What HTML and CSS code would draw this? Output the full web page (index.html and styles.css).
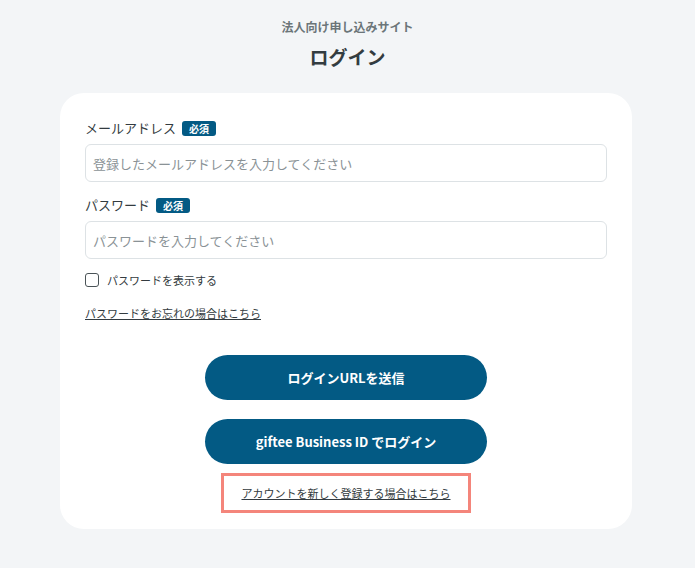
FILE: index.html
```html
<!DOCTYPE html>
<html lang="ja">
<head>
    <meta charset="UTF-8">
    <meta name="viewport" content="width=device-width, initial-scale=1.0">
    <title>ログイン</title>
    <link rel="stylesheet" href="styles.css">
</head>
<body>
    <div class="header">
        <p class="site-name">法人向け申し込みサイト</p>
        <h1>ログイン</h1>
    </div>

    <div class="card">
        <div class="field">
            <label class="label" for="email">メールアドレス <span class="required">必須</span></label>
            <input type="email" id="email" class="input" placeholder="登録したメールアドレスを入力してください">
        </div>

        <div class="field">
            <label class="label" for="password">パスワード <span class="required">必須</span></label>
            <input type="password" id="password" class="input" placeholder="パスワードを入力してください">
        </div>

        <label class="check">
            <input type="checkbox" id="showPassword">
            <span class="box"></span>
            <span>パスワードを表示する</span>
        </label>

        <a href="#" class="link forgot">パスワードをお忘れの場合はこちら</a>

        <div class="actions">
            <button type="button">ログインURLを送信</button>
            <button type="button" class="second">giftee Business ID でログイン</button>
            <div class="signup">
                <a href="#" class="link">アカウントを新しく登録する場合はこちら</a>
            </div>
        </div>
    </div>
</body>
</html>
```

FILE: styles.css
```css
body {
    margin: 0;
    background: #f3f5f7;
    font-family: "Noto Sans CJK JP", "Noto Sans", sans-serif;
    color: #333b40;
}
.header {
    text-align: center;
    padding-top: 17px;
}
.site-name {
    margin: 0;
    font-size: 12px;
    font-weight: bold;
    color: #6b7579;
    line-height: 20px;
}
h1 {
    margin: 6px 0 0;
    font-size: 19px;
    line-height: 28px;
    color: #333c40;
}
.card {
    width: 522px;
    margin: 22px 0 0 60px;
    padding: 25px 25px 16px;
    background: #fff;
    border-radius: 24px;
}
.field {
    margin-bottom: 13px;
}
.label {
    display: flex;
    align-items: center;
    gap: 6px;
    font-size: 13px;
    line-height: 20px;
    margin-bottom: 6px;
}
.required {
    display: inline-block;
    background: #035a84;
    color: #fff;
    font-size: 10px;
    font-weight: bold;
    line-height: 15px;
    padding: 0 7px;
    border-radius: 3px;
}
.input {
    display: block;
    box-sizing: border-box;
    width: 100%;
    height: 38px;
    padding: 0 7px;
    border: 1px solid #dde2e5;
    border-radius: 6px;
    font-family: inherit;
    font-size: 13px;
    color: #333b40;
}
.input::placeholder {
    color: #8a9296;
}
.check {
    display: flex;
    align-items: center;
    gap: 8px;
    font-size: 11px;
    line-height: 16px;
    margin-top: 1px;
}
.check input {
    display: none;
}
.box {
    width: 12px;
    height: 12px;
    border: 1px solid #4a5357;
    border-radius: 3px;
}
.link {
    color: #333b40;
    font-size: 11px;
    line-height: 16px;
    text-decoration: underline;
}
.forgot {
    display: inline-block;
    margin-top: 17px;
}
.actions {
    display: flex;
    flex-direction: column;
    align-items: center;
    margin-top: 32px;
}
button {
    width: 282px;
    height: 45px;
    border: none;
    border-radius: 23px;
    background: #035a84;
    color: #fff;
    font-family: inherit;
    font-size: 13px;
    font-weight: bold;
    cursor: pointer;
}
button.second {
    margin-top: 19px;
}
.signup {
    margin-top: 9px;
    width: 244px;
    height: 34px;
    border: 3px solid #f4857b;
    display: flex;
    align-items: center;
    justify-content: center;
}
```
